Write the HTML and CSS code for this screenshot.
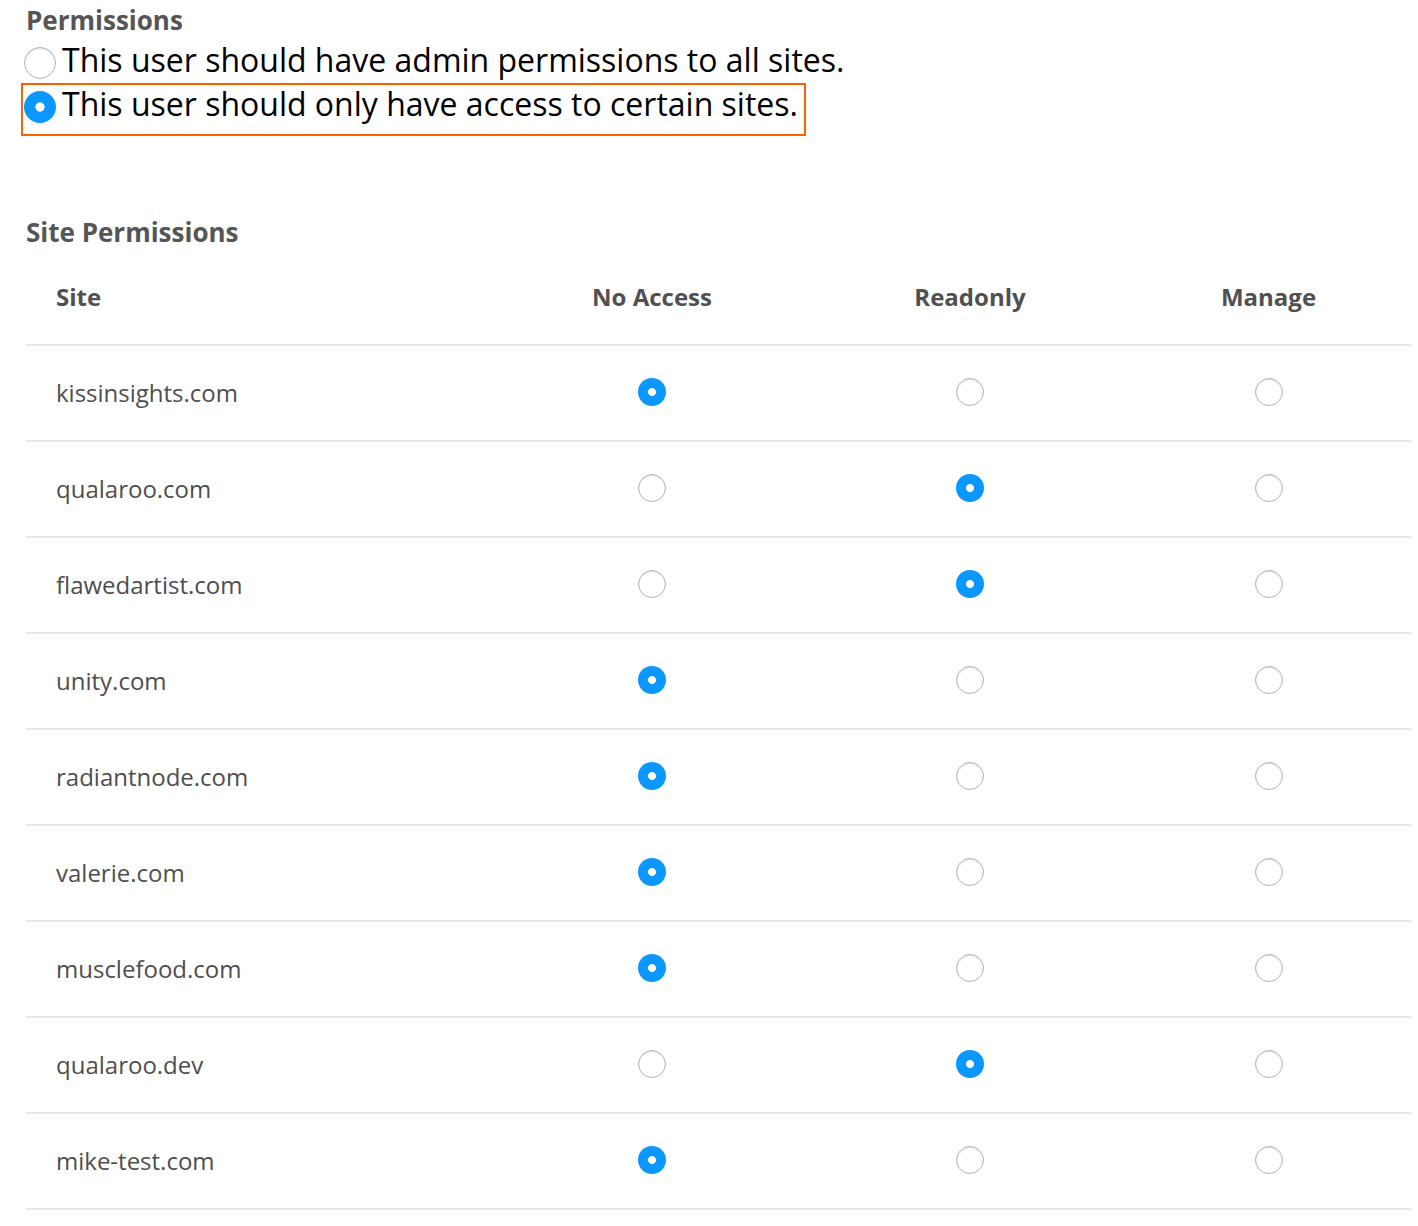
FILE: index.html
```html
<!DOCTYPE html>
<html lang="en">
<head>
<meta charset="utf-8">
<title>Permissions</title>
<link rel="stylesheet" href="styles.css">
</head>
<body>
<div class="page">
  <h2 class="section-title">Permissions</h2>
  <div class="options">
    <label class="option">
      <input class="radio radio-lg" type="radio" name="scope">
      <span class="option-text">This user should have admin permissions to all sites.</span>
    </label>
    <label class="option option-focus">
      <input class="radio radio-lg" type="radio" name="scope" checked>
      <span class="option-text">This user should only have access to certain sites.</span>
    </label>
  </div>

  <h2 class="section-title site-title">Site Permissions</h2>
  <div class="perm-table">
    <div class="perm-row perm-head">
      <div class="cell cell-site">Site</div>
      <div class="cell cell-opt">No Access</div>
      <div class="cell cell-opt">Readonly</div>
      <div class="cell cell-opt">Manage</div>
    </div>

    <div class="perm-row">
      <div class="cell cell-site">kissinsights.com</div>
      <div class="cell cell-opt"><input class="radio" type="radio" name="s1" checked></div>
      <div class="cell cell-opt"><input class="radio" type="radio" name="s1"></div>
      <div class="cell cell-opt"><input class="radio" type="radio" name="s1"></div>
    </div>
    <div class="perm-row">
      <div class="cell cell-site">qualaroo.com</div>
      <div class="cell cell-opt"><input class="radio" type="radio" name="s2"></div>
      <div class="cell cell-opt"><input class="radio" type="radio" name="s2" checked></div>
      <div class="cell cell-opt"><input class="radio" type="radio" name="s2"></div>
    </div>
    <div class="perm-row">
      <div class="cell cell-site">flawedartist.com</div>
      <div class="cell cell-opt"><input class="radio" type="radio" name="s3"></div>
      <div class="cell cell-opt"><input class="radio" type="radio" name="s3" checked></div>
      <div class="cell cell-opt"><input class="radio" type="radio" name="s3"></div>
    </div>
    <div class="perm-row">
      <div class="cell cell-site">unity.com</div>
      <div class="cell cell-opt"><input class="radio" type="radio" name="s4" checked></div>
      <div class="cell cell-opt"><input class="radio" type="radio" name="s4"></div>
      <div class="cell cell-opt"><input class="radio" type="radio" name="s4"></div>
    </div>
    <div class="perm-row">
      <div class="cell cell-site">radiantnode.com</div>
      <div class="cell cell-opt"><input class="radio" type="radio" name="s5" checked></div>
      <div class="cell cell-opt"><input class="radio" type="radio" name="s5"></div>
      <div class="cell cell-opt"><input class="radio" type="radio" name="s5"></div>
    </div>
    <div class="perm-row">
      <div class="cell cell-site">valerie.com</div>
      <div class="cell cell-opt"><input class="radio" type="radio" name="s6" checked></div>
      <div class="cell cell-opt"><input class="radio" type="radio" name="s6"></div>
      <div class="cell cell-opt"><input class="radio" type="radio" name="s6"></div>
    </div>
    <div class="perm-row">
      <div class="cell cell-site">musclefood.com</div>
      <div class="cell cell-opt"><input class="radio" type="radio" name="s7" checked></div>
      <div class="cell cell-opt"><input class="radio" type="radio" name="s7"></div>
      <div class="cell cell-opt"><input class="radio" type="radio" name="s7"></div>
    </div>
    <div class="perm-row">
      <div class="cell cell-site">qualaroo.dev</div>
      <div class="cell cell-opt"><input class="radio" type="radio" name="s8"></div>
      <div class="cell cell-opt"><input class="radio" type="radio" name="s8" checked></div>
      <div class="cell cell-opt"><input class="radio" type="radio" name="s8"></div>
    </div>
    <div class="perm-row">
      <div class="cell cell-site">mike-test.com</div>
      <div class="cell cell-opt"><input class="radio" type="radio" name="s9" checked></div>
      <div class="cell cell-opt"><input class="radio" type="radio" name="s9"></div>
      <div class="cell cell-opt"><input class="radio" type="radio" name="s9"></div>
    </div>
  </div>
</div>
</body>
</html>
```

FILE: styles.css
```css
* {
  box-sizing: border-box;
}

html, body {
  margin: 0;
  padding: 0;
  background: #ffffff;
}

body {
  font-family: "Open Sans", "Liberation Sans", sans-serif;
  color: #555555;
}

.page {
  padding: 5px 6px 0 26px;
}

.section-title {
  margin: 0;
  font-size: 26px;
  font-weight: 700;
  line-height: 30px;
  color: #555555;
}

.options {
  display: flex;
  flex-direction: column;
  align-items: flex-start;
  margin-top: 6px;
}

.option {
  display: flex;
  align-items: flex-start;
  gap: 6px;
  height: 44px;
  margin-left: -3px;
  padding: 0 6px 0 1px;
  cursor: pointer;
}

.option-focus {
  height: 49px;
  outline: 2px solid #ff6000;
}

.option-text {
  font-size: 32px;
  line-height: 44px;
  color: #000000;
  margin-top: -3px;
  white-space: nowrap;
}

.radio {
  -webkit-appearance: none;
  appearance: none;
  margin: 0;
  flex: none;
  width: 28px;
  height: 28px;
  border-radius: 50%;
  background: #ffffff;
  border: 1px solid #b4b4b4;
  box-shadow: inset 0 1px 2px rgba(0, 0, 0, 0.12);
  display: block;
}

.radio:checked {
  border: none;
  background: radial-gradient(circle, #ffffff 0, #ffffff 3.6px, #0a98ff 4.4px);
  box-shadow: none;
}

.radio-lg {
  width: 32px;
  height: 32px;
  margin-top: 6px;
}

.radio-lg:checked {
  background: radial-gradient(circle, #ffffff 0, #ffffff 4.2px, #0a98ff 5px);
}

.site-title {
  margin-top: 83px;
}

.perm-table {
  display: flex;
  flex-direction: column;
}

.perm-row {
  display: grid;
  grid-template-columns: 463px 326px 310px 287px;
  height: 96px;
  border-bottom: 2px solid #e8e8e8;
}

.perm-head {
  height: 99px;
}

.cell {
  display: flex;
  align-items: center;
  font-size: 24px;
  line-height: 32px;
  color: #4e4e4e;
}

.cell-site {
  padding-left: 30px;
}

.cell-opt {
  justify-content: center;
}

.cell-opt .radio {
  margin-bottom: 2px;
}

.perm-head .cell {
  font-weight: 700;
  color: #505050;
  padding-top: 2px;
}
```
